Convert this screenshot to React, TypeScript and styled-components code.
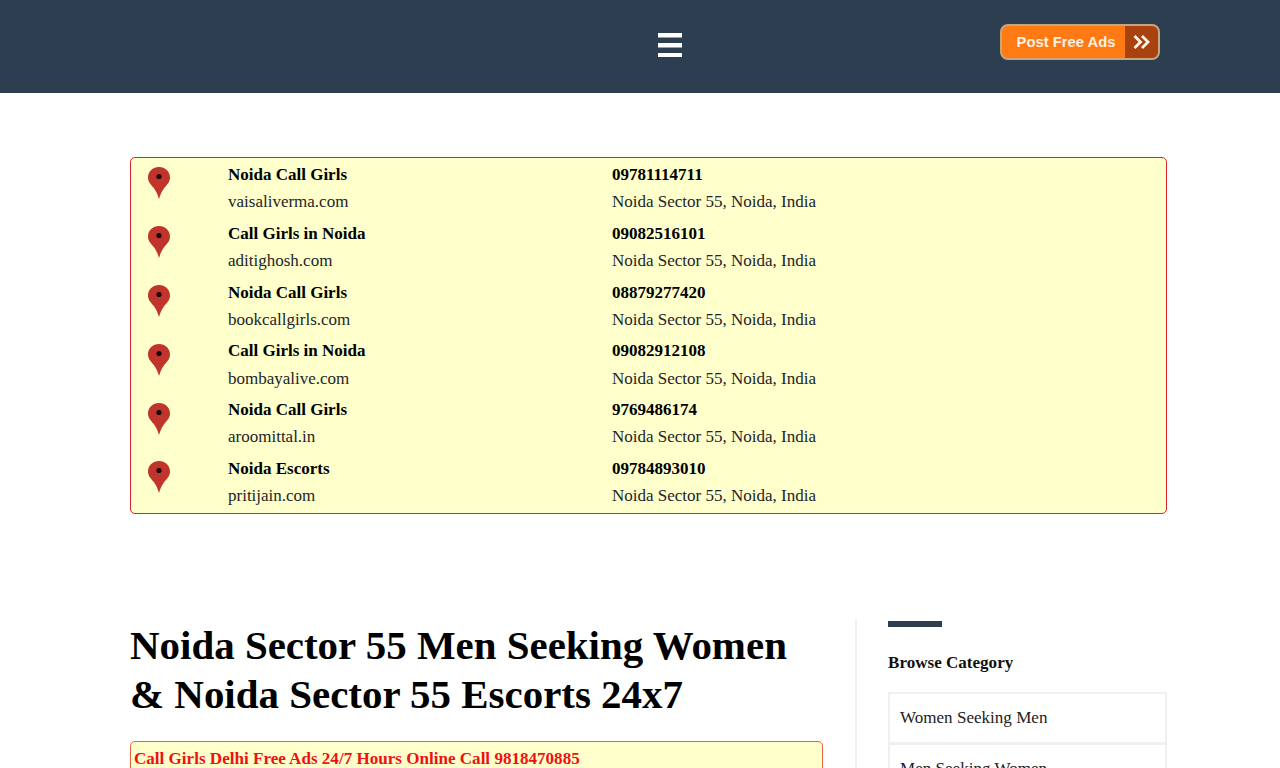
import React from 'react'
import styled, { createGlobalStyle } from 'styled-components'

const GlobalStyle = createGlobalStyle`
  html, body {
    margin: 0;
    padding: 0;
    height: 768px;
    overflow: hidden;
    background: #fff;
  }
  body {
    font-family: 'Liberation Serif', 'Times New Roman', serif;
    font-size: 17px;
    line-height: 27.2px;
    color: #212529;
  }
`

const Header = styled.header`
  height: 93px;
  background: #2c3e50;
  display: grid;
  grid-template-columns: 658px 24px 1fr;
  align-items: center;
  padding-right: 120px;
`

const MenuIcon = styled.svg`
  grid-column: 2;
  display: block;
  width: 24px;
  height: 24px;
  margin-top: -3px;
`

const PostButton = styled.a`
  grid-column: 3;
  justify-self: end;
  width: 160px;
  height: 36px;
  margin-top: -9px;
  box-sizing: border-box;
  border: 2px solid #c4a77d;
  border-radius: 8px;
  background: #ff7a14;
  overflow: hidden;
  display: flex;
  align-items: stretch;
  font-family: 'Liberation Sans', Arial, sans-serif;
  font-weight: 700;
  font-size: 14.8px;
  color: #fff0e0;
`

const PostLabel = styled.span`
  flex: 1;
  display: flex;
  align-items: center;
  justify-content: center;
  padding-left: 5px;
  line-height: 1;
`

const PostArrow = styled.span`
  width: 33px;
  background: #a8430f;
  display: flex;
  align-items: center;
  justify-content: center;
`

const Page = styled.main`
  width: 1037px;
  margin-left: 130px;
  padding-top: 64px;
`

const Listings = styled.section`
  box-sizing: border-box;
  height: 357px;
  border: 1px solid #d9262c;
  border-radius: 5px;
  background: #ffffcc;
  padding: 3px 0 0;
  display: flex;
  flex-direction: column;
  gap: 4.1px;
`

const Listing = styled.div`
  display: grid;
  grid-template-columns: 97px 384px 1fr;
  grid-template-rows: 27.2px 27.5px;
  color: #212529;
`

const PinCell = styled.div`
  grid-row: 1 / span 2;
  padding: 6.4px 0 0 17px;
`

const Pin = styled.svg`
  display: block;
  width: 22px;
  height: 32px;
`

const Strong = styled.div`
  font-weight: 700;
  color: #000;
`

const Columns = styled.div`
  display: grid;
  grid-template-columns: 725px 312px;
  margin-top: 106px;
`

const Article = styled.article`
  width: 693px;
`

const Title = styled.h1`
  margin: 0.5px 0 22px;
  font-size: 40.95px;
  line-height: 49.2px;
  font-weight: 700;
  color: #000;
`

const Notice = styled.div`
  border: 1px solid #e8663f;
  border-radius: 5px;
  background: #ffffcc;
  padding: 3px 3px;
  font-size: 17.07px;
  font-weight: 700;
  color: #ee1111;
  height: 120px;
`

const Sidebar = styled.aside`
  border-left: 2px solid #f0f0f0;
  padding-left: 31px;
`

const Accent = styled.div`
  width: 54px;
  height: 6px;
  margin-top: 1px;
  background: #2c3e50;
`

const SideTitle = styled.h4`
  margin: 22px 0 16px;
  font-size: 17.07px;
  line-height: 27px;
  font-weight: 700;
  color: #111;
`

const CategoryList = styled.ul`
  list-style: none;
  margin: 0;
  padding: 0;
`

const Category = styled.li`
  box-sizing: border-box;
  height: 52px;
  margin-bottom: -1px;
  padding: 10px 10px;
  border: 2px solid #f0f0f0;
  font-size: 17.07px;
  color: #222;
`

const LISTINGS = [
  { name: 'Noida Call Girls', site: 'vaisaliverma.com', phone: '09781114711' },
  { name: 'Call Girls in Noida', site: 'aditighosh.com', phone: '09082516101' },
  { name: 'Noida Call Girls', site: 'bookcallgirls.com', phone: '08879277420' },
  { name: 'Call Girls in Noida', site: 'bombayalive.com', phone: '09082912108' },
  { name: 'Noida Call Girls', site: 'aroomittal.in', phone: '9769486174' },
  { name: 'Noida Escorts', site: 'pritijain.com', phone: '09784893010' },
]

const CATEGORIES = ['Women Seeking Men', 'Men Seeking Women', 'Escorts']

export default function App() {
  return (
    <>
      <GlobalStyle />
      <Header>
        <MenuIcon viewBox="0 0 24 24">
          <path fill="#fff" d="M0 0h24v4.4H0zM0 10h24v4.4H0zM0 20h24v4.4H0z" />
        </MenuIcon>
        <PostButton>
          <PostLabel>Post Free Ads</PostLabel>
          <PostArrow>
            <svg width="18" height="14" viewBox="0 0 18 14">
              <path
                fill="none"
                stroke="#fff3e6"
                strokeWidth="2.8"
                d="M1.5 1l6 6-6 6M9 1l6 6-6 6"
              />
            </svg>
          </PostArrow>
        </PostButton>
      </Header>
      <Page>
        <Listings>
          {LISTINGS.map((item, i) => (
            <Listing key={i}>
              <PinCell>
                <Pin viewBox="0 0 22 32">
                  <path
                    fill="#c0342c"
                    d="M11 0C4.9 0 0 4.6 0 10.4c0 4.6 3 7 5.6 10.4 2.4 3.1 4 6.6 5.4 11.2 1.4-4.6 3-8.1 5.4-11.2C19 17.4 22 15 22 10.4 22 4.6 17.1 0 11 0z"
                  />
                  <circle cx="11" cy="9.5" r="2.6" fill="#1a0505" />
                </Pin>
              </PinCell>
              <Strong>{item.name}</Strong>
              <Strong>{item.phone}</Strong>
              <div>{item.site}</div>
              <div>Noida Sector 55, Noida, India</div>
            </Listing>
          ))}
        </Listings>
        <Columns>
          <Article>
            <Title>
              Noida Sector 55 Men Seeking Women
              <br />& Noida Sector 55 Escorts 24x7
            </Title>
            <Notice>Call Girls Delhi Free Ads 24/7 Hours Online Call 9818470885</Notice>
          </Article>
          <Sidebar>
            <Accent />
            <SideTitle>Browse Category</SideTitle>
            <CategoryList>
              {CATEGORIES.map(c => (
                <Category key={c}>{c}</Category>
              ))}
            </CategoryList>
          </Sidebar>
        </Columns>
      </Page>
    </>
  )
}
